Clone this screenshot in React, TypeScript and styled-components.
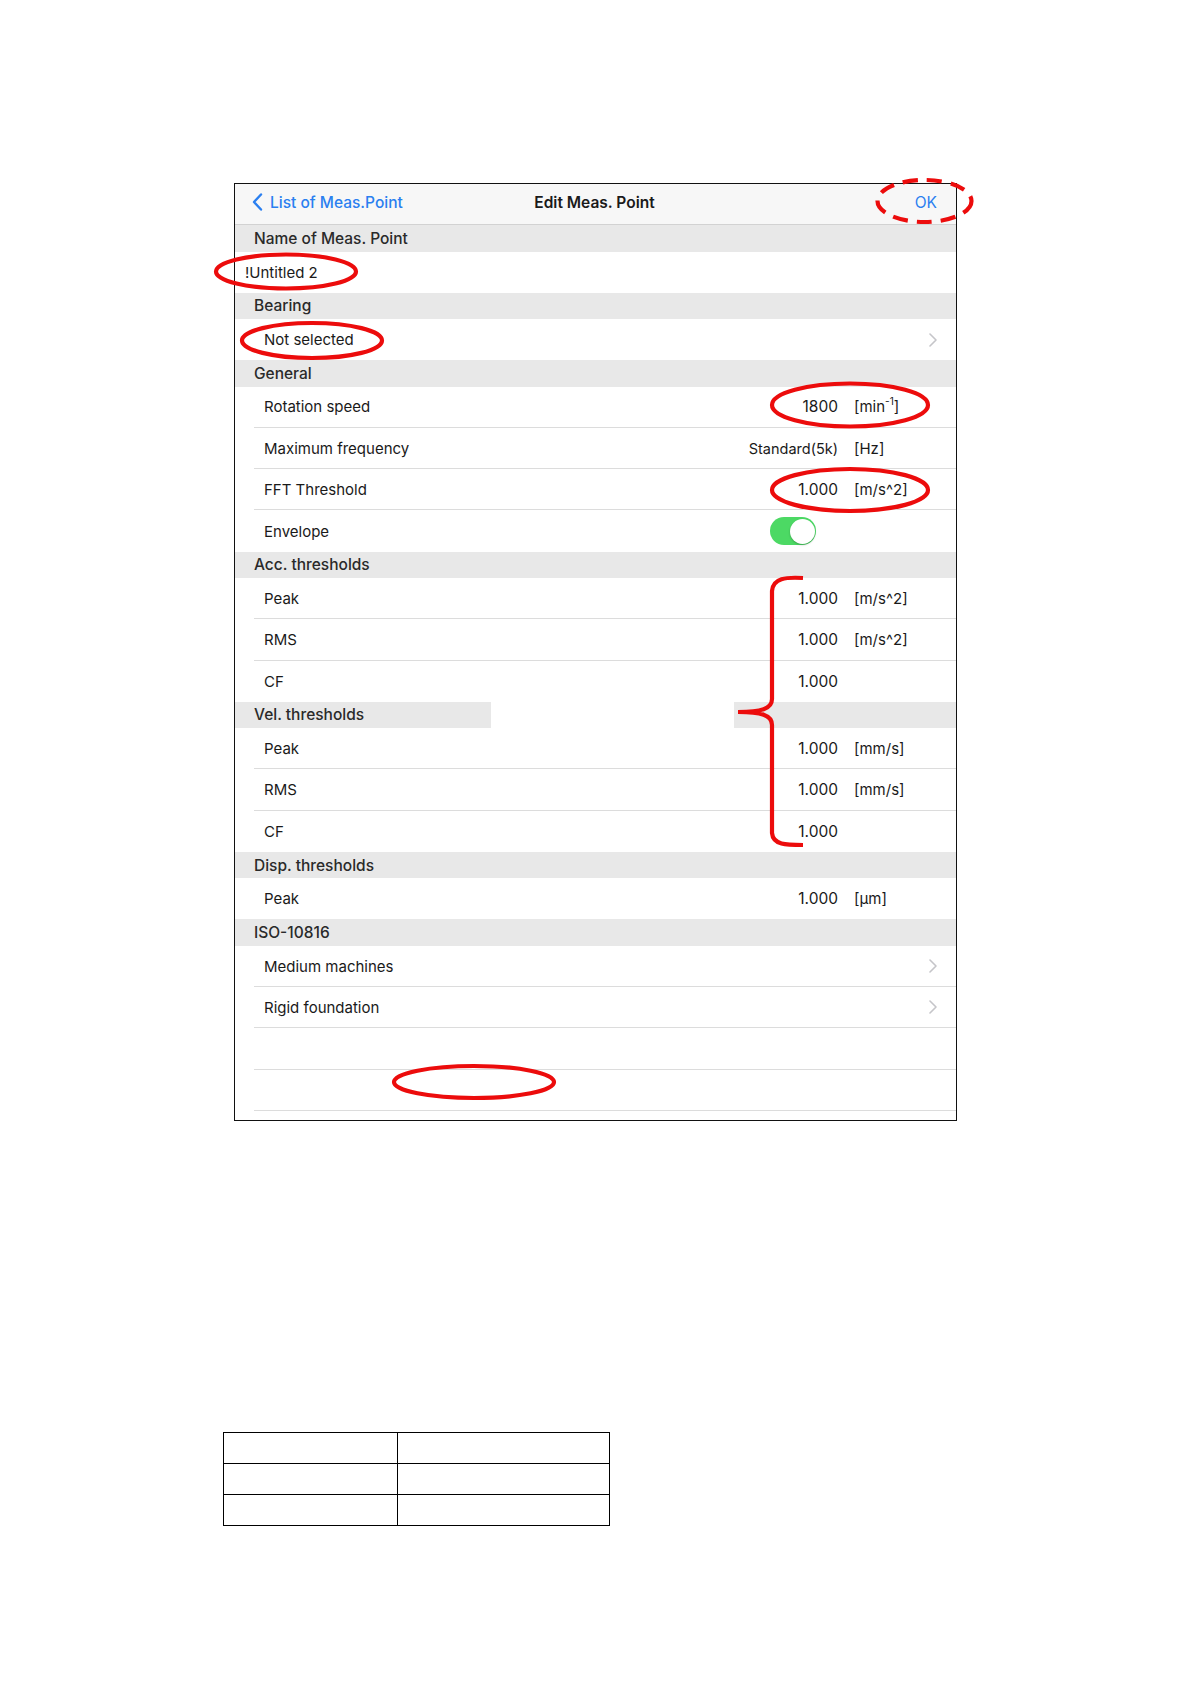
import React from 'react';
import styled, { createGlobalStyle } from 'styled-components';

const GlobalStyle = createGlobalStyle`
  html, body { margin: 0; padding: 0; background: #ffffff; }
  body { font-family: Inter, "Liberation Sans", Arial, sans-serif; color: #1a1a1a; }
`;

const Page = styled.div`
  position: relative;
  width: 1190px;
  height: 1684px;
  box-sizing: border-box;
  padding-top: 183px;
  display: flex;
  flex-direction: column;
  background: #fff;
`;

const Frame = styled.div`
  margin-left: 234px;
  width: 723px;
  height: 938px;
  box-sizing: border-box;
  border: 1px solid #111;
  overflow: hidden;
  display: flex;
  flex-direction: column;
  flex-shrink: 0;
  background: #fff;
`;

const NavBar = styled.div`
  height: 41px;
  flex-shrink: 0;
  box-sizing: border-box;
  border-bottom: 1px solid #d2d2d2;
  background: #f7f7f7;
  display: grid;
  grid-template-columns: 1fr auto 1fr;
  align-items: center;
  padding: 0 19px 4px 17px;
  font-size: 15.5px;
`;

const BackButton = styled.div`
  display: flex;
  align-items: center;
  gap: 7px;
  color: #2a7ff0;
  font-weight: 500;
`;

const NavTitle = styled.div`
  font-weight: 600;
  color: #1a1a1a;
`;

const NavAction = styled.div`
  justify-self: end;
  color: #2a7ff0;
`;

const SectionHeader = styled.div<{ $broken?: boolean }>`
  height: 26.5px;
  flex-shrink: 0;
  box-sizing: border-box;
  display: flex;
  align-items: center;
  padding-left: 19px;
  font-size: 15.5px;
  font-weight: 500;
  color: #2a2a2a;
  background: ${(p) =>
    p.$broken
      ? 'linear-gradient(to right, #e8e8e8 0 256px, #ffffff 256px 499px, #e8e8e8 499px)'
      : '#e8e8e8'};
`;

const Row = styled.div<{ $sep?: boolean; $flush?: boolean }>`
  height: 41.2px;
  flex-shrink: 0;
  box-sizing: border-box;
  display: flex;
  align-items: center;
  margin-left: ${(p) => (p.$flush ? '0' : '19px')};
  padding-left: 10px;
  border-bottom: ${(p) => (p.$sep ? '1px solid #dcdcdc' : '0')};
  font-size: 15px;
  color: #1a1a1a;
`;

const Label = styled.div`
  flex: 1;
`;

const Value = styled.div<{ $small?: boolean }>`
  text-align: right;
  font-size: ${(p) => (p.$small ? '14.5px' : '15.5px')};
`;

const Unit = styled.div`
  width: 102px;
  margin-left: 16px;
  box-sizing: border-box;
`;

const Sup = styled.sup`
  font-size: 10px;
  vertical-align: 7px;
  line-height: 0;
`;

const Chevron = styled.svg`
  margin-right: 19px;
  flex-shrink: 0;
`;

const Toggle = styled.div`
  width: 46px;
  height: 28px;
  margin-right: 22px;
  border-radius: 14px;
  background: #4cd964;
  display: flex;
  align-items: center;
  justify-content: flex-end;
  padding: 1.5px;
  box-sizing: border-box;
`;

const Knob = styled.div`
  width: 25px;
  height: 25px;
  border-radius: 50%;
  background: #fff;
  box-shadow: 0 1px 2px rgba(0, 0, 0, 0.25);
`;

const Annotations = styled.svg`
  position: absolute;
  left: 0;
  top: 0;
  pointer-events: none;
`;

const GridTable = styled.table`
  margin-left: 223px;
  margin-top: 311px;
  border-collapse: collapse;
  width: 387px;
`;

const Cell = styled.td<{ $w: number }>`
  width: ${(p) => p.$w}px;
  height: 30px;
  border: 1px solid #000;
  padding: 0;
`;

const ChevronIcon = () => (
  <Chevron width="8" height="14" viewBox="0 0 8 14">
    <polyline points="1,1 7,7 1,13" fill="none" stroke="#c5c5c9" strokeWidth="1.6" strokeLinecap="round" strokeLinejoin="round" />
  </Chevron>
);

type ValueRow = { label: string; value: React.ReactNode; unit?: React.ReactNode; sep?: boolean; small?: boolean };

const ValueRows = ({ rows }: { rows: ValueRow[] }) => (
  <>
    {rows.map((r, i) => (
      <Row key={i} $sep={r.sep}>
        <Label>{r.label}</Label>
        <Value $small={r.small}>{r.value}</Value>
        <Unit>{r.unit}</Unit>
      </Row>
    ))}
  </>
);

const RED = '#ec0c0c';

export default function App() {
  return (
    <>
      <GlobalStyle />
      <Page>
        <Frame>
          <NavBar>
            <BackButton>
              <svg width="11" height="18" viewBox="0 0 11 18">
                <polyline points="9,1.5 2,9 9,16.5" fill="none" stroke="#2a7ff0" strokeWidth="2.4" strokeLinecap="round" strokeLinejoin="round" />
              </svg>
              List of Meas.Point
            </BackButton>
            <NavTitle>Edit Meas. Point</NavTitle>
            <NavAction>OK</NavAction>
          </NavBar>

          <SectionHeader>Name of Meas. Point</SectionHeader>
          <Row $flush>
            <Label>!Untitled 2</Label>
          </Row>

          <SectionHeader>Bearing</SectionHeader>
          <Row>
            <Label>Not selected</Label>
            <ChevronIcon />
          </Row>

          <SectionHeader>General</SectionHeader>
          <ValueRows
            rows={[
              { label: 'Rotation speed', value: '1800', unit: (<>[min<Sup>-1</Sup>]</>), sep: true },
              { label: 'Maximum frequency', value: 'Standard(5k)', unit: '[Hz]', sep: true, small: true },
              { label: 'FFT Threshold', value: '1.000', unit: '[m/s^2]', sep: true },
            ]}
          />
          <Row>
            <Label>Envelope</Label>
            <Toggle>
              <Knob />
            </Toggle>
            <Unit />
          </Row>

          <SectionHeader>Acc. thresholds</SectionHeader>
          <ValueRows
            rows={[
              { label: 'Peak', value: '1.000', unit: '[m/s^2]', sep: true },
              { label: 'RMS', value: '1.000', unit: '[m/s^2]', sep: true },
              { label: 'CF', value: '1.000' },
            ]}
          />

          <SectionHeader $broken>Vel. thresholds</SectionHeader>
          <ValueRows
            rows={[
              { label: 'Peak', value: '1.000', unit: '[mm/s]', sep: true },
              { label: 'RMS', value: '1.000', unit: '[mm/s]', sep: true },
              { label: 'CF', value: '1.000' },
            ]}
          />

          <SectionHeader>Disp. thresholds</SectionHeader>
          <ValueRows rows={[{ label: 'Peak', value: '1.000', unit: '[µm]' }]} />

          <SectionHeader>ISO-10816</SectionHeader>
          <Row $sep>
            <Label>Medium machines</Label>
            <ChevronIcon />
          </Row>
          <Row $sep>
            <Label>Rigid foundation</Label>
            <ChevronIcon />
          </Row>
          <Row $sep />
          <Row $sep />
          <Row />
        </Frame>

        <GridTable>
          <tbody>
            {[0, 1, 2].map((r) => (
              <tr key={r}>
                <Cell $w={174} />
                <Cell $w={213} />
              </tr>
            ))}
          </tbody>
        </GridTable>

        <Annotations width="1190" height="1684" viewBox="0 0 1190 1684">
          <g fill="none" stroke={RED} strokeWidth="4.2">
            <ellipse cx="924.5" cy="201" rx="47" ry="21" strokeDasharray="15 9" />
            <ellipse cx="286" cy="271.5" rx="70" ry="17" />
            <ellipse cx="312" cy="340.5" rx="70" ry="17.5" />
            <ellipse cx="850" cy="405" rx="78" ry="21.5" />
            <ellipse cx="850" cy="490" rx="78" ry="21" />
            <ellipse cx="474" cy="1082" rx="80" ry="16" />
            <path
              d="M803,578 C786,577 773,578 772,591 L772,699 C772,709 761,712 738,712 C761,712 772,715 772,725 L772,833 C773,845 786,845 803,845"
              strokeLinecap="butt"
            />
          </g>
        </Annotations>
      </Page>
    </>
  );
}
